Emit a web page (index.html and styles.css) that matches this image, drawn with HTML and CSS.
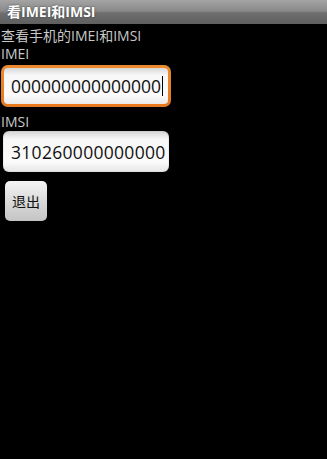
FILE: index.html
```html
<!DOCTYPE html>
<html>
<head>
<meta charset="utf-8">
<link rel="stylesheet" href="styles.css">
</head>
<body>
<div class="titlebar">看IMEI和IMSI</div>
<div class="content">
  <div class="label desc">查看手机的IMEI和IMSI</div>
  <div class="label">IMEI</div>
  <div class="field focused"><div class="inner">000000000000000<span class="cursor"></span></div></div>
  <div class="label imsi">IMSI</div>
  <div class="field plain"><div class="inner">310260000000000</div></div>
  <div class="btnrow"><div class="button">退出</div></div>
</div>
</body>
</html>
```
FILE: styles.css
```css
html, body {
  margin: 0;
  padding: 0;
  background: #000;
  height: 100%;
}
body {
  font-family: "Open Sans", "Noto Sans", "Noto Sans CJK SC", sans-serif;
  color: #c8c8c8;
}
.titlebar {
  height: 24px;
  box-sizing: border-box;
  padding-left: 7px;
  line-height: 24px;
  font-size: 14px;
  font-weight: bold;
  color: #fff;
  background: linear-gradient(#a4a4a4, #8a8a8a 45%, #6e6e6e 55%, #5f5f5f);
  text-shadow: 0 0 2px #333;
}
.content {
  display: flex;
  flex-direction: column;
  align-items: flex-start;
}
.label {
  font-size: 14px;
  line-height: 18px;
  padding-left: 1px;
}
.desc {
  margin-top: 3px;
}
.imsi {
  margin-top: 6px;
}
.field {
  width: 166px;
  height: 41px;
  margin-left: 3px;
  box-sizing: border-box;
  border-radius: 6px;
  background: linear-gradient(#d4d4d4, #f7f7f7 20%, #fbfbfb 75%, #e6e6e6);
  display: flex;
  align-items: center;
  box-shadow: inset 0 0 1px #888;
}
.field.focused {
  width: 170px;
  height: 42px;
  margin-left: 1px;
  margin-top: 2px;
  padding: 3px;
  background: linear-gradient(#f08a2c, #e8771a);
  border-radius: 7px;
}
.focused .inner {
  width: 100%;
  height: 100%;
  border-radius: 4px;
  background: linear-gradient(#d8d8d8, #f7f7f7 20%, #fbfbfb 75%, #e9e9e9);
  padding-left: 7px;
}
.inner {
  box-sizing: border-box;
  display: flex;
  align-items: center;
  padding-left: 8px;
  font-size: 17.5px;
  color: #111;
}
.plain .inner {
  letter-spacing: 0.3px;
}
.cursor {
  display: inline-block;
  width: 1px;
  height: 20px;
  background: #000;
  margin-left: 1px;
}
.btnrow {
  margin-top: 9px;
  margin-left: 5px;
}
.button {
  width: 42px;
  height: 40px;
  box-sizing: border-box;
  border-radius: 5px;
  background: linear-gradient(#f4f4f4, #dadada 50%, #c4c4c4);
  color: #111;
  font-size: 14px;
  display: flex;
  align-items: center;
  justify-content: center;
  font-family: "Noto Sans CJK SC", sans-serif;
}
```
